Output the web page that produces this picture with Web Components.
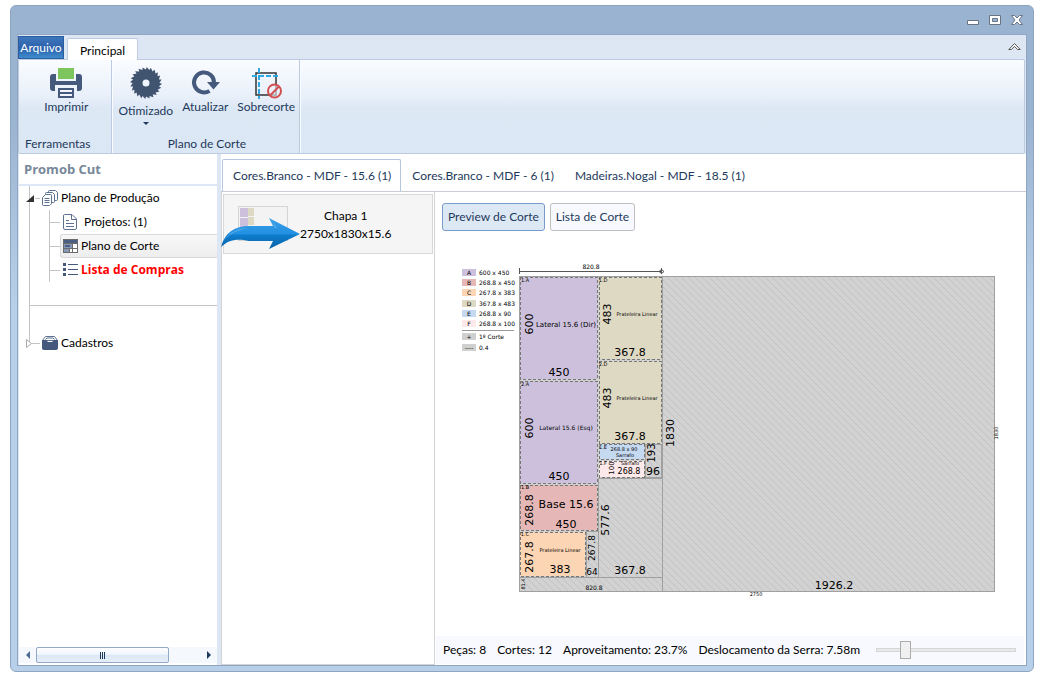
<!DOCTYPE html>
<html lang="pt-BR">
<head>
<meta charset="utf-8">
<title>Promob Cut</title>
<style>
  html, body { height: 100%; }
  body {
    margin: 0;
    background: #fff;
    color: #000;
    font: 12px/16px Lato, "Open Sans", sans-serif;
  }
</style>
</head>
<body>
<cut-window>
  <cut-ribbon slot="ribbon">
    <ribbon-group label="Ferramentas" start>
      <ribbon-button icon="print">Imprimir</ribbon-button>
    </ribbon-group>
    <ribbon-group label="Plano de Corte">
      <ribbon-button icon="saw" menu>Otimizado</ribbon-button>
      <ribbon-button icon="refresh">Atualizar</ribbon-button>
      <ribbon-button icon="crop">Sobrecorte</ribbon-button>
    </ribbon-group>
  </cut-ribbon>
  <cut-sidebar slot="side">
    <span slot="title">Promob Cut</span>
    <tree-node icon="stack" root opened>Plano de Produção</tree-node>
    <tree-node slot="children" icon="page">&nbsp;Projetos: (1)</tree-node>
    <tree-node slot="children" icon="plan" selected>Plano de Corte</tree-node>
    <tree-node slot="children" icon="list" alert>Lista de Compras</tree-node>
    <tree-node slot="other" icon="drawer" root>Cadastros</tree-node>
  </cut-sidebar>
  <cut-workspace slot="main">
    <sheet-tab slot="tabs" selected>Cores.Branco - MDF - 15.6 (1)</sheet-tab>
    <sheet-tab slot="tabs">Cores.Branco - MDF - 6 (1)</sheet-tab>
    <sheet-tab slot="tabs">Madeiras.Nogal - MDF - 18.5 (1)</sheet-tab>
    <sheet-card slot="sheets">
      <span slot="name">Chapa 1</span>
      <span slot="size">2750x1830x15.6</span>
    </sheet-card>
    <view-button slot="views" pressed>Preview de Corte</view-button>
    <view-button slot="views">Lista de Corte</view-button>
    <cut-diagram></cut-diagram>
    <status-bar slot="status">
      <span>Peças: 8</span>
      <span>Cortes: 12</span>
      <span>Aproveitamento: 23.7%</span>
      <span>Deslocamento da Serra: 7.58m</span>
    </status-bar>
  </cut-workspace>
</cut-window>

<script>
// outline of the saw blade, teeth leaning clockwise
function sawPath(teeth, outer, inner) {
  let d = '';
  for (let i = 0; i < teeth; i++) {
    const a = (i / teeth) * Math.PI * 2;
    const b = a + (Math.PI * 2 / teeth) * 0.15;
    d += (i ? 'L' : 'M') + (16 + inner * Math.cos(a)).toFixed(2) + ' ' + (16 + inner * Math.sin(a)).toFixed(2);
    d += 'L' + (16 + outer * Math.cos(b)).toFixed(2) + ' ' + (16 + outer * Math.sin(b)).toFixed(2);
  }
  return d + 'Z M19.5 16a3.5 3.5 0 1 0-7 0a3.5 3.5 0 1 0 7 0Z';
}

const icons = {
  print: `<svg width="32" height="32" viewBox="0 0 32 32"><path fill="#7cc65d" d="M8 1h16v11H8z"/><path fill="#44597b" d="M3 7h3v7h20V7h3a3 3 0 0 1 3 3v11a3 3 0 0 1-3 3h-2v-6H5v6H3a3 3 0 0 1-3-3V10a3 3 0 0 1 3-3z"/><path fill="#44597b" d="M8 21h16v10H8z"/><path fill="#f2f6fc" d="M10 23h12v2H10zM10 27h12v2H10z"/></svg>`,
  saw: `<svg width="32" height="32" viewBox="0 0 32 32"><path fill="#40536f" fill-rule="evenodd" d="${sawPath(24, 16, 13.4)}"/></svg>`,
  refresh: `<svg width="32" height="32" viewBox="0 0 32 32"><path fill="none" stroke="#44597b" stroke-width="4" d="M20.500 23.800A10 10 0 1 1 25 16"/><path fill="#44597b" d="M18 15h13L24.500 22.500z"/></svg>`,
  crop: `<svg width="32" height="32" viewBox="0 0 32 32"><path fill="none" stroke="#333" stroke-width="1.500" d="M6 6h20v22H6z"/><path fill="none" stroke="#2fa8e6" stroke-width="2" stroke-dasharray="5 2" d="M2 9h27M9 1v31"/><circle cx="24.500" cy="24" r="6.500" fill="#edf2fa" fill-opacity=".6" stroke="#d0504f" stroke-width="2"/><path stroke="#d0504f" stroke-width="2" d="M20 28.500l9-9"/></svg>`,
  stack: `<svg width="16" height="16" viewBox="0 0 16 16" fill="#fff" stroke="#5d7191"><path d="M6.500 1.500q0-1 1-1h6l2 2v7q0 1-1 1h-8z"/><path d="M3.500 3.500q0-1 1-1h6l2 2v7q0 1-1 1h-8z"/><path d="M.5 7.500l3-3h5q1 0 1 1v8q0 1-1 1l-1 1h-6q-1 0-1-1z"/><path d="M2.500 8.500h5M2.500 10.500h5M2.500 12.500h5"/></svg>`,
  page: `<svg width="16" height="16" viewBox="0 0 16 16" fill="none" stroke="#5d7191"><path fill="#fff" d="M2.500.5h7.500l4.500 4.500v9q0 1.500-1.500 1.500H3Q1.500 15.500 1.500 14V2q0-1.500 1-1.500z"/><path d="M9.500 1v4.500h4.500M4 6.500h3M4 9.500h8M4 12.500h8"/></svg>`,
  plan: `<svg width="16" height="16" viewBox="0 0 16 16"><path fill="#6c6c6c" d="M1 1h15v14H1z"/><path fill="#4a5f82" d="M2 2h13v3H2z"/><path fill="#8797b5" d="M2 6h8v4H2zM2 11h5v3H2z"/><path fill="#4a5f82" d="M3 7h5v2H3z"/><path fill="#fff" d="M11 6h4v4h-4zM8 11h2v3H8zM11 11h4v3h-4z"/></svg>`,
  list: `<svg width="16" height="16" viewBox="0 0 16 16" fill="#44597b"><path d="M1 1h3v3H1zM1 6h3v3H1zM1 11h3v3H1zM6 2h10v1H6zM6 7h10v1H6zM6 12h10v1H6z"/></svg>`,
  drawer: `<svg width="16" height="16" viewBox="0 0 16 16"><path fill="#fff" stroke="#5d7191" d="M3.500 1.500h9l3 4H.5z"/><path fill="none" stroke="#5d7191" d="M3.500 4.500l1.500-1.500h6l1.500 1.500"/><path fill="#44597b" d="M0 5h4l2 2h4l2-2h4v8q0 2-2 2H2q-2 0-2-2z"/></svg>`,
};

class CutWindow extends HTMLElement {
  constructor() {
    super();
    this.attachShadow({ mode: 'open' });
    this.shadowRoot.innerHTML = `
      <style>
        :host {
          display: flex;
          flex-direction: column;
          box-sizing: border-box;
          min-height: 100vh;
          padding: 5px 3px 4px 10px;
        }
        #frame {
          flex: 1;
          display: flex;
          flex-direction: column;
          padding: 0 6px 5px;
          border: 1px solid #8fa5c1;
          border-radius: 6px;
          background: linear-gradient(#9ab3d0 0, #9ab3d0 110px, #b8cfe9 300px);
        }
        header {
          display: flex;
          justify-content: flex-end;
          align-items: center;
          gap: 8px;
          height: 28px;
          padding-right: 3px;
        }
        header button {
          display: flex;
          border: 0;
          padding: 0;
          background: none;
        }
        #body {
          flex: 1;
          display: flex;
          flex-direction: column;
          border: 1px solid #8fa5c1;
          background: #dde7f4;
        }
        #panes {
          flex: 1;
          display: flex;
          padding-left: 1px;
        }
        ::slotted([slot=side]) {
          width: 198px;
          flex: none;
          margin-right: 4px;
        }
        ::slotted([slot=main]) {
          flex: 1;
          min-width: 0;
        }
      </style>
      <div id="frame">
        <header>
          <button aria-label="Minimizar"><svg width="14" height="14"><path fill="#fff" stroke="#6b7482" d="M1.500 7.500h11v4h-11z"/></svg></button>
          <button aria-label="Maximizar"><svg width="14" height="14"><path fill="#fff" fill-rule="evenodd" stroke="#6b7482" d="M1.500 2.500h11v9h-11zM4.500 5.500h5v3h-5z"/></svg></button>
          <button aria-label="Fechar"><svg width="14" height="14"><path fill="#fff" stroke="#6b7482" d="M1.500 2.500h3l2.500 2.500 2.500-2.500h3l-3.500 4.500 3.500 4.500h-3l-2.500-2.500-2.500 2.500h-3l3.500-4.500z"/></svg></button>
        </header>
        <div id="body">
          <slot name="ribbon"></slot>
          <div id="panes">
            <slot name="side"></slot>
            <slot name="main"></slot>
          </div>
        </div>
      </div>
    `;
  }
}
customElements.define('cut-window', CutWindow);

class CutRibbon extends HTMLElement {
  constructor() {
    super();
    this.attachShadow({ mode: 'open' });
    this.shadowRoot.innerHTML = `
      <style>
        :host { display: block; padding-right: 1px; }
        nav {
          display: flex;
          align-items: flex-end;
          height: 24px;
        }
        button { font: inherit; }
        #file {
          align-self: stretch;
          margin: 1px 3px 0 0;
          width: 46px;
          padding: 0;
          border: 1px solid #2c5da0;
          background: linear-gradient(#3e76bd, #2d62a9 50%, #2a66b0 60%, #3f8ccc);
          color: #fff;
        }
        #main-tab {
          height: 22px;
          margin-bottom: -1px;
          padding: 2px 12px 0;
          border: 1px solid #bccbe0;
          border-bottom: 0;
          border-radius: 2px 2px 0 0;
          background: #fff;
          position: relative;
        }
        #fold {
          display: flex;
          margin: 0 4px 8px auto;
          padding: 0;
          border: 0;
          background: none;
        }
        #groups {
          display: flex;
          height: 93px;
          border: 1px solid #bccbe0;
          border-radius: 2px;
          background: linear-gradient(#fafcff, #e9f0fa 38%, #dde8f5 52%, #dbe7f4);
        }
      </style>
      <nav>
        <button id="file">Arquivo</button>
        <button id="main-tab">Principal</button>
        <button id="fold" aria-label="Recolher"><svg width="13" height="9"><path fill="#fff" stroke="#555" d="M.8 7.500L6.500 1.500l5.700 6h-2.500L6.500 4.500 3.300 7.500z"/></svg></button>
      </nav>
      <div id="groups"><slot></slot></div>
    `;
  }
}
customElements.define('cut-ribbon', CutRibbon);

class RibbonGroup extends HTMLElement {
  constructor() {
    super();
    this.attachShadow({ mode: 'open' });
    this.shadowRoot.innerHTML = `
      <style>
        :host {
          display: flex;
          flex-direction: column;
          justify-content: space-between;
          padding: 7px 4px 1px 7px;
          border-right: 1px solid #bccbe0;
          box-shadow: 1px 0 #f8fbff;
          color: #1e395b;
          text-align: center;
        }
        :host([start]) { padding: 7px 20px 1px 6px; text-align: left; }
        #items {
          display: flex;
          justify-content: center;
          align-items: flex-start;
          gap: 9px;
        }
        :host([start]) #items { padding-left: 17px; }
      </style>
      <div id="items"><slot></slot></div>
      <div id="label"></div>
    `;
    this.shadowRoot.getElementById('label').textContent = this.getAttribute('label');
  }
}
customElements.define('ribbon-group', RibbonGroup);

class RibbonButton extends HTMLElement {
  constructor() {
    super();
    this.attachShadow({ mode: 'open' });
    this.shadowRoot.innerHTML = `
      <style>
        :host { display: block; }
        button {
          display: flex;
          flex-direction: column;
          align-items: center;
          padding: 0;
          border: 0;
          background: none;
          color: inherit;
          font: inherit;
        }
        :host([menu]) #text { margin-top: 4px; }
        #arrow {
          display: none;
          margin-top: 3px;
          border: 3px solid transparent;
          border-top-color: #1e395b;
          border-bottom: 0;
        }
        :host([menu]) #arrow { display: block; }
      </style>
      <button>
        ${icons[this.getAttribute('icon')]}
        <span id="text"><slot></slot></span>
        <span id="arrow"></span>
      </button>
    `;
  }
}
customElements.define('ribbon-button', RibbonButton);

class CutSidebar extends HTMLElement {
  constructor() {
    super();
    this.attachShadow({ mode: 'open' });
    this.shadowRoot.innerHTML = `
      <style>
        :host {
          display: flex;
          flex-direction: column;
          background: #fff;
        }
        h1 {
          margin: 0;
          height: 30px;
          padding-left: 5px;
          border-bottom: 2px solid #dde8f6;
          color: #778899;
          font: bold 13px/30px "Open Sans", sans-serif;
        }
        /* guide line ends at the middle of the last node */
        #tree {
          background: linear-gradient(#c4c4c4, #c4c4c4) no-repeat 10px 0 / 1px calc(100% - 12px);
        }
        #children {
          margin-left: 30px;
          background: linear-gradient(#c4c4c4, #c4c4c4) no-repeat 0 0 / 1px 100%;
        }
        #rule {
          margin: 23px 0 25px 11px;
          border-top: 1px solid #c4c4c4;
        }
        #scroll {
          display: flex;
          align-items: center;
          height: 16px;
          margin-top: auto;
          margin-bottom: 2px;
          background: #f5f8fd;
        }
        #scroll button {
          width: 17px;
          padding: 0;
          border: 0;
          background: none;
          display: flex;
          justify-content: center;
        }
        #track { flex: 1; display: flex; }
        #thumb {
          width: 80%;
          height: 14px;
          border: 1px solid #93a9c8;
          border-radius: 2px;
          background: linear-gradient(#fcfdff, #f0f6fd 45%, #dce8f5 50%, #e5eef8);
          display: flex;
          justify-content: center;
          align-items: center;
        }
      </style>
      <h1><slot name="title"></slot></h1>
      <div id="tree">
        <slot></slot>
        <div id="children"><slot name="children"></slot></div>
        <div id="rule"></div>
        <slot name="other"></slot>
      </div>
      <div id="scroll">
        <button aria-label="Rolar para a esquerda"><svg width="4" height="8"><path fill="#4d6a93" d="M4 0v8L0 4z"/></svg></button>
        <div id="track"><div id="thumb"><svg width="6" height="7"><path stroke="#1e395b" d="M.5 0v7M2.500 0v7M4.500 0v7"/></svg></div></div>
        <button aria-label="Rolar para a direita"><svg width="4" height="8"><path fill="#1e395b" d="M0 0v8l4-4z"/></svg></button>
      </div>
    `;
  }
}
customElements.define('cut-sidebar', CutSidebar);

class TreeNode extends HTMLElement {
  constructor() {
    super();
    this.attachShadow({ mode: 'open' });
    const arrow = this.hasAttribute('opened')
      ? '<path fill="#333" d="M8 1v7H0z"/>'
      : '<path stroke="#c4c4c4" d="M6 4.500h3"/><path fill="#fff" stroke="#aaa" d="M.5.5v8l5-4z"/>';
    const toggle = this.hasAttribute('root')
      ? `<button aria-label="Expandir"><svg width="9" height="9">${arrow}</svg></button>`
      : '';
    this.shadowRoot.innerHTML = `
      <style>
        :host {
          display: flex;
          align-items: center;
          height: 24px;
        }
        :host([root]) { padding-left: 7px; }
        button {
          display: flex;
          padding: 0;
          border: 0;
          background: none;
        }
        #dash {
          width: 11px;
          border-top: 1px solid #c4c4c4;
        }
        :host([root]) #dash { width: 5px; }
        a {
          flex: 1;
          display: flex;
          align-items: center;
          gap: 3px;
          height: 22px;
          padding-left: 1px;
          border: 1px solid transparent;
          border-right: 0;
          border-radius: 3px 0 0 3px;
          color: inherit;
          text-decoration: none;
          white-space: nowrap;
        }
        :host([selected]) a {
          border-color: #d9d9d9;
          background: linear-gradient(#f8f8f8, #ededed);
        }
        :host([alert]) {
          color: #f00;
          font-family: "Open Sans", sans-serif;
          font-weight: bold;
        }
      </style>
      ${toggle}
      <span id="dash"></span>
      <a href="#">${icons[this.getAttribute('icon')]}<span><slot></slot></span></a>
    `;
  }
}
customElements.define('tree-node', TreeNode);

class CutWorkspace extends HTMLElement {
  constructor() {
    super();
    this.attachShadow({ mode: 'open' });
    this.shadowRoot.innerHTML = `
      <style>
        :host {
          display: flex;
          flex-direction: column;
          background: #fff;
        }
        #tabs {
          display: flex;
          padding: 5px 0 0 1px;
          border-bottom: 1px solid #c9cdd3;
        }
        #content { flex: 1; display: flex; }
        #sheets {
          width: 210px;
          flex: none;
          padding: 2px 1px;
          border: 1px solid #d4d4d4;
          border-top: 0;
        }
        #view {
          flex: 1;
          min-width: 0;
          display: flex;
          flex-direction: column;
          padding: 11px 2px 1px 1px;
        }
        #views {
          display: flex;
          gap: 5px;
          padding-left: 6px;
          margin-bottom: 25px;
        }
        ::slotted([slot=status]) { margin-top: auto; }
      </style>
      <div id="tabs"><slot name="tabs"></slot></div>
      <div id="content">
        <div id="sheets"><slot name="sheets"></slot></div>
        <div id="view">
          <div id="views"><slot name="views"></slot></div>
          <slot></slot>
          <slot name="status"></slot>
        </div>
      </div>
    `;
  }
}
customElements.define('cut-workspace', CutWorkspace);

class SheetTab extends HTMLElement {
  constructor() {
    super();
    this.attachShadow({ mode: 'open' });
    this.shadowRoot.innerHTML = `
      <style>
        :host { display: block; }
        button {
          height: 32px;
          padding: 0 9px 0 10px;
          border: 1px solid transparent;
          border-bottom: 0;
          border-radius: 2px 2px 0 0;
          background: none;
          color: #1e395b;
          font: inherit;
          white-space: nowrap;
        }
        :host([selected]) button { border-color: #b5c6dd; background: #fff; }
      </style>
      <button><slot></slot></button>
    `;
  }
}
customElements.define('sheet-tab', SheetTab);

class SheetCard extends HTMLElement {
  constructor() {
    super();
    this.attachShadow({ mode: 'open' });
    this.shadowRoot.innerHTML = `
      <style>
        :host {
          display: flex;
          align-items: flex-start;
          gap: 12px;
          height: 47px;
          padding: 11px 14px 0;
          border: 1px solid #d8d8d8;
          background: #f5f5f5;
          position: relative;
        }
        #thumb { border: 1px solid #d4d4d4; flex: none; }
        #text {
          display: flex;
          flex-direction: column;
          gap: 2px;
          padding-top: 2px;
          text-align: center;
        }
        /* pointer lies over the card and its left edge */
        #pointer {
          position: absolute;
          left: -3px;
          top: 22px;
        }
      </style>
      <svg id="thumb" width="48" height="33">
        <path fill="#f3f3f3" d="M0 0h48v33H0z"/>
        <path fill="#cdc0dc" d="M1 1h8v9H1zM1 11h8v10H1z"/>
        <path fill="#ded9c3" d="M9 1h6v8H9zM9 10h6v8H9z"/>
        <path fill="#e5b8b7" d="M1 22h8v5H1z"/>
      </svg>
      <div id="text"><slot name="name"></slot><slot name="size"></slot></div>
      <svg id="pointer" width="80" height="34" viewBox="0 0 80 34">
        <defs><linearGradient id="blue" x2="0" y2="1">
          <stop offset="0" stop-color="#3fa0e8"/><stop offset=".5" stop-color="#2290e2"/><stop offset=".56" stop-color="#0d7ccb"/><stop offset="1" stop-color="#0a62a8"/>
        </linearGradient></defs>
        <path fill="url(#blue)" d="M0 30C4 15 14 9 28 9h24l-4-8 31 16-31 15 4-8H28C16 21 7 23 0 30z"/>
        <path fill="#7cc4f4" opacity=".5" d="M3 24C8 15 17 11 28 11h26l-3-7 5 7H28C17 13 9 16 3 24z"/>
      </svg>
    `;
  }
}
customElements.define('sheet-card', SheetCard);

class ViewButton extends HTMLElement {
  constructor() {
    super();
    this.attachShadow({ mode: 'open' });
    this.shadowRoot.innerHTML = `
      <style>
        :host { display: block; }
        button {
          height: 28px;
          padding: 0 5px;
          border: 1px solid #bfbfbf;
          border-radius: 3px;
          background: #f8f9fe;
          color: #1e395b;
          font: inherit;
          white-space: nowrap;
        }
        :host([pressed]) button { border-color: #7a9ccb; background: #dde8f5; }
      </style>
      <button><slot></slot></button>
    `;
  }
}
customElements.define('view-button', ViewButton);

// parts on the sheet: x, y, w, h, fill
const parts = [
  [1, 1, 77, 102, '#cdc0dc'],
  [1, 105, 77, 102, '#cdc0dc'],
  [1, 209, 77, 45, '#e5b8b7'],
  [1, 256, 65, 44, '#fcd5b4'],
  [80, 1, 62, 82, '#ded9c3'],
  [80, 85, 62, 82, '#ded9c3'],
  [80, 168, 45, 15, '#c5d9f1'],
  [80, 185, 45, 16, '#fde9e9'],
];

const offcuts = [
  [143, 0, 332, 315],
  [79, 202, 64, 99],
  [67, 255, 12, 46],
  [126, 168, 16, 33],
  [0, 301, 143, 14],
];

// x, y, font size, text, rotated
const labels = [
  [40, 100, 11, '450'], [40, 204, 11, '450'], [47, 252, 11, '450'], [41, 297, 11, '383'],
  [14, 48, 11, '600', 1], [14, 152, 11, '600', 1], [14, 234, 11, '268.8', 1], [14, 281, 11, '267.8', 1],
  [47, 51, 7, 'Lateral 15.6 (Dir)'], [47, 154, 6, 'Lateral 15.6 (Esq)'],
  [47, 232, 11, 'Base 15.6'], [41, 276, 5, 'Prateleira Linear'],
  [111, 80, 11, '367.8'], [111, 164, 11, '367.8'], [111, 298, 11, '367.8'],
  [92, 38, 11, '483', 1], [92, 122, 11, '483', 1],
  [118, 40, 5, 'Prateleira Linear'], [118, 124, 5, 'Prateleira Linear'],
  [105, 175, 5, '268.8 x 90'], [106, 181, 5, 'Sarrafo'], [111, 189, 5, 'Sarrafo'],
  [110, 198, 8, '268.8'], [95, 192, 7, '100', 1],
  [136, 177, 10, '193', 1], [134, 199, 11, '96'],
  [155, 157, 11, '1830', 1], [90, 244, 11, '577.6', 1],
  [76, 272, 9, '267.8', 1], [73, 299, 9, '64'],
  [6, 308, 5, '81.4', 1], [75, 314, 6, '820.8'], [315, 313, 11, '1926.2'],
  [237, 320, 5, '2750'], [479, 157, 5, '1830', 1], [72, -7, 6, '820.8'],
  [6, 6, 5, '1.A'], [6, 110, 5, '2.A'], [6, 213, 5, '1.B'], [6, 260, 5, '1.C'],
  [84, 6, 5, '1.D'], [84, 90, 5, '2.D'], [84, 173, 5, '1.E'], [84, 189, 5, '1.F'],
];

const legend = [
  ['A', '600 x 450', '#cdc0dc', -3], ['B', '268.8 x 450', '#e5b8b7', 7], ['C', '267.8 x 383', '#fcd5b4', 17],
  ['D', '367.8 x 483', '#ded9c3', 28], ['E', '268.8 x 90', '#c5d9f1', 38], ['F', '268.8 x 100', '#fde9e9', 48],
  ['+', '1º Corte', '#d0d0d0', 61], ['----', '0.4', '#d0d0d0', 72],
];

class CutDiagram extends HTMLElement {
  constructor() {
    super();
    this.attachShadow({ mode: 'open' });
    const rect = (x, y, w, h, rest) => `<rect x="${x}" y="${y}" width="${w}" height="${h}" ${rest}/>`;
    this.shadowRoot.innerHTML = `
      <style>
        :host { display: block; }
        svg { display: block; width: 100%; height: auto; }
        rect { shape-rendering: crispEdges; }
        text {
          font-family: "DejaVu Sans", sans-serif;
          text-anchor: middle;
        }
        .legend text { font-size: 6px; }
        .legend .size { text-anchor: start; }
      </style>
      <svg viewBox="-83 -20 588 350" role="img" aria-label="Plano de corte da chapa">
        <defs>
          <pattern id="hatch" width="7" height="7" patternUnits="userSpaceOnUse">
            <path fill="#d2d2d2" d="M0 0h7v7H0z"/>
            <path stroke="#c2c2c2" d="M-1-1l9 9M-1 6l2 2M6-1l2 2"/>
          </pattern>
        </defs>
        ${rect(0, 0, 475, 315, 'fill="url(#hatch)" stroke="#a0a0a0"')}
        ${offcuts.map(o => rect(...o, 'fill="none" stroke="#a0a0a0"')).join('')}
        ${parts.map(([x, y, w, h, fill]) => rect(x, y, w, h, `fill="${fill}" stroke="#777" stroke-dasharray="3 2"`)).join('')}
        <path fill="none" stroke="#555" d="M0-4.500h142M.5-8v6M142.500-8v6M140-4.500l2.500-2 2.500 2-2.500 2z"/>
        ${labels.map(([x, y, size, text, up]) =>
          `<text x="${x}" y="${y}" font-size="${size}" ${up ? `transform="rotate(-90 ${x} ${y})"` : ''}>${text}</text>`).join('')}
        <g class="legend">
          ${legend.map(([key, size, fill, y]) => `
            ${rect(-57, y - 4, 14, 7, `fill="${fill}"`)}
            <text x="-50" y="${y + 2}">${key}</text>
            <text class="size" x="-40" y="${y + 2}">${size}</text>`).join('')}
          <path stroke="#999" d="M-57 54.500h52"/>
        </g>
      </svg>
    `;
  }
}
customElements.define('cut-diagram', CutDiagram);

class StatusBar extends HTMLElement {
  constructor() {
    super();
    this.attachShadow({ mode: 'open' });
    this.shadowRoot.innerHTML = `
      <style>
        :host {
          display: flex;
          align-items: center;
          gap: 11px;
          height: 28px;
          padding: 0 8px 0 7px;
          background: #f7f9fe;
          white-space: nowrap;
        }
        input {
          flex: 1;
          min-width: 60px;
          height: 18px;
          margin: 0 0 0 5px;
          appearance: none;
          background: none;
        }
        input::-webkit-slider-runnable-track {
          height: 4px;
          box-sizing: border-box;
          border: 1px solid #d6d6d6;
          background: #e7eaea;
        }
        input::-webkit-slider-thumb {
          appearance: none;
          box-sizing: border-box;
          width: 11px;
          height: 18px;
          margin-top: -8px;
          border: 1px solid #acacac;
          background: #f0f0f0;
        }
      </style>
      <slot></slot>
      <input type="range" aria-label="Zoom" min="0" max="100" value="18">
    `;
  }
}
customElements.define('status-bar', StatusBar);
</script>
</body>
</html>
